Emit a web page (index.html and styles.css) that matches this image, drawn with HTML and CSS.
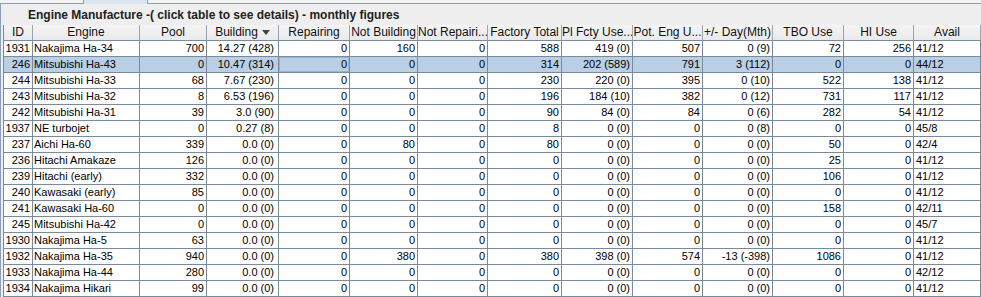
FILE: index.html
```html
<!DOCTYPE html>
<html>
<head>
<meta charset="utf-8">
<link rel="stylesheet" href="styles.css">
</head>
<body>
<div class="tabs">
  <div class="tab tab-a"></div>
  <div class="tab tab-sel"></div>
  <div class="tab tab-c"></div>
</div>
<div class="panel">
  <div class="title">Engine Manufacture -( click table to see details) - monthly figures</div>
  <div class="table">
    <div class="row head">
      <div>ID</div><div>Engine</div><div>Pool</div>
      <div class="sorted">Building <svg class="arrow" width="8" height="5" viewBox="0 0 8 5"><path d="M0 0H8L4 5Z" fill="#444"/></svg></div>
      <div>Repairing</div><div>Not Building</div><div>Not Repairi...</div><div>Factory Total</div><div>Pl Fcty Use...</div><div>Pot. Eng U...</div><div>+/- Day(Mth)</div><div>TBO Use</div><div>HI Use</div><div>Avail</div>
    </div>
    <div class="row"><div>1931</div><div>Nakajima Ha-34</div><div>700</div><div>14.27 (428)</div><div>0</div><div>160</div><div>0</div><div>588</div><div>419 (0)</div><div>507</div><div>0 (9)</div><div>72</div><div>256</div><div>41/12</div></div>
    <div class="row sel"><div>246</div><div>Mitsubishi Ha-43</div><div>0</div><div>10.47 (314)</div><div class="focus">0</div><div>0</div><div>0</div><div>314</div><div>202 (589)</div><div>791</div><div>3 (112)</div><div>0</div><div>0</div><div>44/12</div></div>
    <div class="row"><div>244</div><div>Mitsubishi Ha-33</div><div>68</div><div>7.67 (230)</div><div>0</div><div>0</div><div>0</div><div>230</div><div>220 (0)</div><div>395</div><div>0 (10)</div><div>522</div><div>138</div><div>41/12</div></div>
    <div class="row"><div>243</div><div>Mitsubishi Ha-32</div><div>8</div><div>6.53 (196)</div><div>0</div><div>0</div><div>0</div><div>196</div><div>184 (10)</div><div>382</div><div>0 (12)</div><div>731</div><div>117</div><div>41/12</div></div>
    <div class="row"><div>242</div><div>Mitsubishi Ha-31</div><div>39</div><div>3.0 (90)</div><div>0</div><div>0</div><div>0</div><div>90</div><div>84 (0)</div><div>84</div><div>0 (6)</div><div>282</div><div>54</div><div>41/12</div></div>
    <div class="row"><div>1937</div><div>NE turbojet</div><div>0</div><div>0.27 (8)</div><div>0</div><div>0</div><div>0</div><div>8</div><div>0 (0)</div><div>0</div><div>0 (8)</div><div>0</div><div>0</div><div>45/8</div></div>
    <div class="row"><div>237</div><div>Aichi Ha-60</div><div>339</div><div>0.0 (0)</div><div>0</div><div>80</div><div>0</div><div>80</div><div>0 (0)</div><div>0</div><div>0 (0)</div><div>50</div><div>0</div><div>42/4</div></div>
    <div class="row"><div>236</div><div>Hitachi Amakaze</div><div>126</div><div>0.0 (0)</div><div>0</div><div>0</div><div>0</div><div>0</div><div>0 (0)</div><div>0</div><div>0 (0)</div><div>25</div><div>0</div><div>41/12</div></div>
    <div class="row"><div>239</div><div>Hitachi (early)</div><div>332</div><div>0.0 (0)</div><div>0</div><div>0</div><div>0</div><div>0</div><div>0 (0)</div><div>0</div><div>0 (0)</div><div>106</div><div>0</div><div>41/12</div></div>
    <div class="row"><div>240</div><div>Kawasaki (early)</div><div>85</div><div>0.0 (0)</div><div>0</div><div>0</div><div>0</div><div>0</div><div>0 (0)</div><div>0</div><div>0 (0)</div><div>0</div><div>0</div><div>41/12</div></div>
    <div class="row"><div>241</div><div>Kawasaki Ha-60</div><div>0</div><div>0.0 (0)</div><div>0</div><div>0</div><div>0</div><div>0</div><div>0 (0)</div><div>0</div><div>0 (0)</div><div>158</div><div>0</div><div>42/11</div></div>
    <div class="row"><div>245</div><div>Mitsubishi Ha-42</div><div>0</div><div>0.0 (0)</div><div>0</div><div>0</div><div>0</div><div>0</div><div>0 (0)</div><div>0</div><div>0 (0)</div><div>0</div><div>0</div><div>45/7</div></div>
    <div class="row"><div>1930</div><div>Nakajima Ha-5</div><div>63</div><div>0.0 (0)</div><div>0</div><div>0</div><div>0</div><div>0</div><div>0 (0)</div><div>0</div><div>0 (0)</div><div>0</div><div>0</div><div>41/12</div></div>
    <div class="row"><div>1932</div><div>Nakajima Ha-35</div><div>940</div><div>0.0 (0)</div><div>0</div><div>380</div><div>0</div><div>380</div><div>398 (0)</div><div>574</div><div>-13 (-398)</div><div>1086</div><div>0</div><div>41/12</div></div>
    <div class="row"><div>1933</div><div>Nakajima Ha-44</div><div>280</div><div>0.0 (0)</div><div>0</div><div>0</div><div>0</div><div>0</div><div>0 (0)</div><div>0</div><div>0 (0)</div><div>0</div><div>0</div><div>42/12</div></div>
    <div class="row"><div>1934</div><div>Nakajima Hikari</div><div>99</div><div>0.0 (0)</div><div>0</div><div>0</div><div>0</div><div>0</div><div>0 (0)</div><div>0</div><div>0 (0)</div><div>0</div><div>0</div><div>41/12</div></div>
  </div>
</div>
</body>
</html>
```
FILE: styles.css
```css
html, body {
  margin: 0;
  padding: 0;
}
body {
  width: 981px;
  height: 297px;
  overflow: hidden;
  background: #eeeeee;
  font-family: "Liberation Sans", Arial, sans-serif;
  color: #000;
}
.tabs {
  display: flex;
  height: 4px;
}
.tab {
  box-sizing: border-box;
  height: 4px;
}
.tab-a {
  width: 84px;
  background: #f3f3f3;
  border-bottom: 1px solid #8c9fb5;
  border-right: 1px solid #8c9fb5;
}
.tab-sel {
  width: 63px;
  background: #dbe6f1;
}
.tab-c {
  flex: 1;
  background: #f3f3f3;
  border-bottom: 1px solid #8c9fb5;
  border-left: 1px solid #8c9fb5;
}
.panel {
  border-left: 1px solid #8c9fb5;
  border-top: 1px solid #ffffff;
  margin-top: -1px;
  padding-left: 2px;
}
.title {
  height: 21px;
  line-height: 23px;
  padding-left: 25px;
  font-weight: bold;
  font-size: 12px;
  color: #222;
}
.table {
  border-left: 1px solid #7a8a99;
  background: #fff;
}
.row {
  display: grid;
  grid-template-columns: 29px 107px 67px 72px 71px 68px 70px 74px 71px 70px 70px 71px 70px 67px;
  height: 16px;
}
.row > div {
  box-sizing: border-box;
  border-right: 1px solid #7a8a99;
  border-bottom: 1px solid #7a8a99;
  font-size: 11px;
  line-height: 15px;
  text-align: right;
  padding-right: 2px;
  white-space: nowrap;
  overflow: hidden;
}
.row > div:nth-child(2) {
  text-align: left;
  padding-left: 1px;
}
.row > div:nth-child(4) {
  padding-right: 4px;
}
.row > div:nth-child(14) {
  text-align: left;
  padding-left: 2px;
}
.row.sel > div {
  background: #b8cfe5;
}
.row.sel > div.focus {
  box-shadow: inset 0 0 0 1px #98b2cf;
}
.row.head {
  height: 16px;
  background: linear-gradient(#f4f4f4, #e9e9e9);
}
.row.head > div {
  text-align: center;
  padding: 0;
  font-size: 12px;
  line-height: 15px;
  color: #111;
  border-right-color: #9aa6b3;
  border-bottom-color: #7a8a99;
}
.row.head > div:nth-child(14) {
  padding: 0;
}
.sorted {
  display: flex;
  justify-content: center;
  align-items: center;
  gap: 4px;
}
.arrow {
  display: block;
}
```
